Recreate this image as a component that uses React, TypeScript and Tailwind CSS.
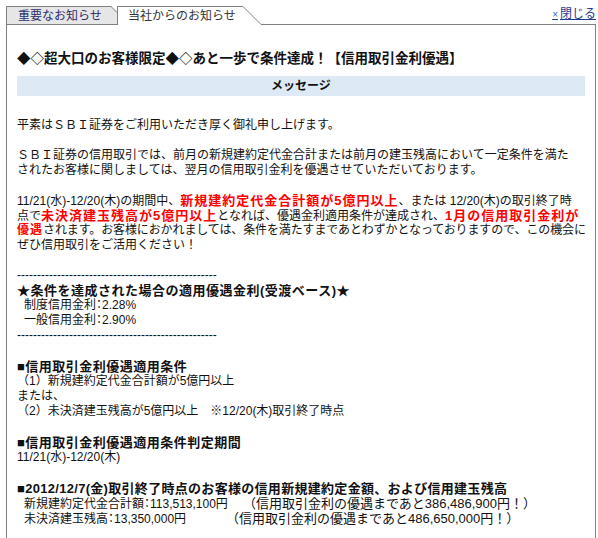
import React from "react";

const Line: React.FC<{ children?: React.ReactNode; className?: string }> = ({
  children,
  className = "",
}) => <div className={`whitespace-nowrap h-[15px] leading-[15px] ${className}`}>{children}</div>;

const Blank = () => <div className="h-[15px]" />;

// red emphasis, a bit larger and spaced like the synthetic bold of the original
const Red: React.FC<{ children: React.ReactNode; small?: boolean }> = ({ children, small }) => (
  <span
    className={
      small
        ? "text-[12px] font-bold tracking-[1px] text-[#ff0000]"
        : "text-[13px] font-bold tracking-[1px] text-[#ff0000]"
    }
  >
    {children}
  </span>
);

// narrow full-width colon
const Colon = () => <span className="[font-feature-settings:'palt']">：</span>;

const DASHES = "-".repeat(50);

export default function App() {
  return (
    <div className="flex h-screen min-h-[538px] flex-col overflow-hidden bg-white pl-[6px] pr-[2px] pt-[6px] font-['Liberation_Sans','Noto_Sans_CJK_JP',sans-serif] text-[12px] text-[#111]">
      {/* TABS */}
      <div className="flex h-[19px] w-[590px] shrink-0">
        <div className="relative flex h-[19px] w-[111px] items-center border-b border-l border-t border-[#808080] bg-[#e6e6e6] pl-[11px] text-[#2c2c6c]">
          重要なお知らせ
          <svg className="absolute right-0 top-[-1px]" width="6" height="7" viewBox="0 0 6 7">
            <polygon points="0,0 6,0 6,6" fill="#ffffff" />
            <line x1="0" y1="0.5" x2="6" y2="6.5" stroke="#808080" strokeWidth="1" />
          </svg>
        </div>
        <div className="flex h-[19px] w-[126px] items-center border-l border-t border-[#808080] bg-white pl-[10px] text-[#333]">
          当社からのお知らせ
        </div>
        <svg width="18" height="19" viewBox="0 0 18 19" className="shrink-0">
          <line x1="0" y1="0.5" x2="18" y2="18.5" stroke="#808080" strokeWidth="1" />
        </svg>
        <div className="flex flex-1 items-start justify-end border-b border-[#808080] pt-[1px]">
          <a href="#" className="leading-[15px] text-[#1f3a93] underline">
            <span className="mr-[2px] text-[10px] text-[#3366cc]">×</span>閉じる
          </a>
        </div>
      </div>

      {/* BODY */}
      <div className="w-[590px] flex-1 border-l border-r border-[#808080] px-[10px] pt-[24px]">
        <div className="whitespace-nowrap font-['Noto_Sans_CJK_JP',sans-serif] text-[13.5px] font-bold leading-[16px] text-[#111]">
          ◆◇超大口のお客様限定◆◇あと一歩で条件達成！【信用取引金利優遇】
        </div>

        <div className="mt-[11px] h-[20px] bg-[#dde9f4] text-center font-bold leading-[20px]">
          メッセージ
        </div>

        <div className="mt-[22px]">
          <Line>平素はＳＢＩ証券をご利用いただき厚く御礼申し上げます。</Line>
          <Blank />
          <Line>ＳＢＩ証券の信用取引では、前月の新規建約定代金合計または前月の建玉残高において一定条件を満た</Line>
          <Line>されたお客様に関しましては、翌月の信用取引金利を優遇させていただいております。</Line>
          <Blank />
          <Line>
            11/21(水)-12/20(木)の期間中、<Red>新規建約定代金合計額が5億円以上</Red>、または 12/20(木)の取引終了時
          </Line>
          <Line>
            点で<Red>未決済建玉残高が5億円以上</Red>となれば、優遇金利適用条件が達成され、<Red>1月の信用取引金利が</Red>
          </Line>
          <Line className="tracking-[-0.12px]">
            <Red small>優遇</Red>されます。お客様におかれましては、条件を満たすまであとわずかとなっておりますので、この機会に
          </Line>
          <Line>ぜひ信用取引をご活用ください！</Line>
          <Blank />
          <Line>{DASHES}</Line>
          <Line className="text-[13px] font-bold tracking-[0.5px]">★条件を達成された場合の適用優遇金利(受渡ベース)★</Line>
          <Line className="pl-[7px]">制度信用金利<Colon />2.28%</Line>
          <Line className="pl-[7px]">一般信用金利<Colon />2.90%</Line>
          <Line>{DASHES}</Line>
          <Blank />
          <Line className="mt-[1px] text-[13px] font-bold tracking-[0.5px]">■信用取引金利優遇適用条件</Line>
          <Line>（1）新規建約定代金合計額が5億円以上</Line>
          <Line>または、</Line>
          <Line>（2）未決済建玉残高が5億円以上　※12/20(木)取引終了時点</Line>
          <Blank />
          <Line className="mt-[1px] text-[13px] font-bold tracking-[0.5px]">■信用取引金利優遇適用条件判定期間</Line>
          <Line>11/21(水)-12/20(木)</Line>
          <Blank />
          <Line className="mt-[1px] text-[13px] font-bold tracking-[0.3px]">
            ■2012/12/7(金)取引終了時点のお客様の信用新規建約定金額、および信用建玉残高
          </Line>
          <Line className="pl-[7px]">
            新規建約定代金合計額<Colon />113,513,100円
            <span className="ml-[15px] text-[13px]">（信用取引金利の優遇まであと386,486,900円！）</span>
          </Line>
          <Line className="pl-[7px]">
            未決済建玉残高<Colon />13,350,000円
            <span className="ml-[40px] text-[13px]">（信用取引金利の優遇まであと486,650,000円！）</span>
          </Line>
        </div>
      </div>
    </div>
  );
}
